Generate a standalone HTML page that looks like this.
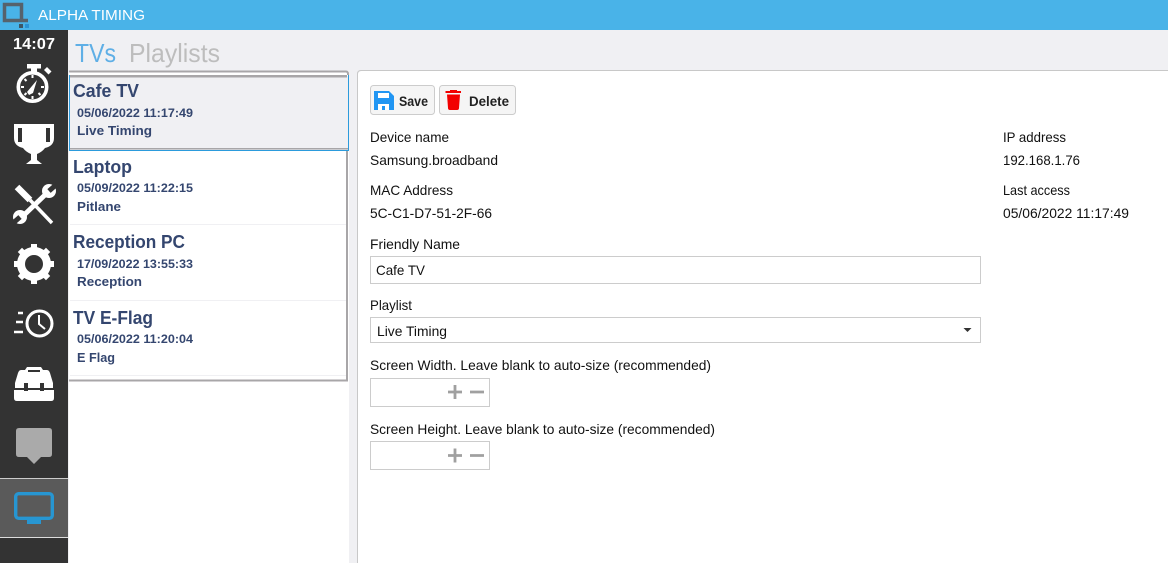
<!DOCTYPE html>
<html lang="en"><head><meta charset="utf-8"><title>Alpha Timing</title>
<style>
html,body{margin:0;padding:0;width:1168px;height:563px;overflow:hidden;background:#f0f0f3}
svg{position:absolute;left:0;top:0;display:block}
text{font-family:"Liberation Sans",sans-serif;white-space:pre}
.d{font-size:14px;fill:#111}
.t{font-size:18px;font-weight:bold;fill:#34466f}
.s{font-size:12px;font-weight:bold;fill:#34466f}
.l{font-size:13px;font-weight:bold;fill:#34466f}
.b{font-size:14px;font-weight:bold;fill:#222}
</style></head><body>
<svg width="1168" height="563" viewBox="0 0 1168 563" xmlns="http://www.w3.org/2000/svg">
<!-- title bar -->
<rect x="0" y="0" width="1168" height="30" fill="#49b3e8"/>
<path d="M4.500 4.500H21.500V20.500H4.500Z M21.500 20.500H28" fill="#49b3e8" stroke="#56626c" stroke-width="3.500"/>
<rect x="19" y="24" width="4" height="4" fill="#3d5666"/><rect x="25" y="24" width="4" height="4" fill="#2a93d5"/>
<text x="38" y="20" font-size="15" fill="#fff" textLength="107" lengthAdjust="spacingAndGlyphs">ALPHA TIMING</text>
<!-- sidebar -->
<rect x="0" y="30" width="68" height="533" fill="#333"/>
<text x="13" y="49" font-size="16" font-weight="bold" fill="#fff" textLength="42" lengthAdjust="spacingAndGlyphs">14:07</text>
<!-- stopwatch -->
<g fill="#fff">
<rect x="27" y="64" width="14" height="4.500"/><rect x="31" y="68" width="6" height="4"/>
<path d="M44 70l3-3 4.500 4.500-3 3z"/>
</g>
<circle cx="32.500" cy="87" r="14.200" fill="none" stroke="#fff" stroke-width="3.600"/>
<path d="M37 80 L27 92 L29 95 L33 93 Z" fill="#fff"/>
<g stroke="#fff" stroke-width="2"><path d="M32.500 75v3M21 87h3M41 87h3M32.500 96v3M24.500 79l2 2M24.500 95l2-2M40.500 95l-2-2"/></g>
<!-- trophy -->
<path d="M14 124H54V138Q54 146 45 148Q42 152 37 154V160L42 164H26L31 160V154Q26 152 23 148Q14 146 14 138Z" fill="#fff"/>
<rect x="18" y="128" width="4" height="14" fill="#333"/><rect x="46" y="128" width="4" height="14" fill="#333"/>
<!-- tools -->
<g fill="none">
<path d="M17 187L30 200" stroke="#fff" stroke-width="6.500"/>
<path d="M30 200L52 223" stroke="#fff" stroke-width="3.500"/>
<path d="M47 193L23 216" stroke="#fff" stroke-width="5"/>
</g>
<circle cx="49" cy="191" r="7" fill="#fff"/><circle cx="20" cy="217" r="7" fill="#fff"/>
<path d="M49 191L57 184M20 217L12 224" stroke="#333" stroke-width="5" fill="none"/>
<!-- gear -->
<g fill="none" stroke="#fff">
<circle cx="34" cy="264" r="13" stroke-width="8"/>
<path d="M34 244v40M14 264h40M19.900 249.900l28.200 28.200M48.100 249.900l-28.200 28.200" stroke-width="6" stroke-dasharray="5 30 5"/>
</g>
<!-- clock speed -->
<circle cx="39.500" cy="323.500" r="12.500" fill="none" stroke="#fff" stroke-width="3"/>
<path d="M39 315V324L45 329" fill="none" stroke="#fff" stroke-width="2"/>
<path d="M18 313H23M16 322H23M14 332H23" fill="none" stroke="#fff" stroke-width="2.500"/>
<!-- toolbox -->
<path d="M27 367H41L43 370H47Q49 370 50 373L53 383V388H15V383L18 373Q19 370 21 370H25Z" fill="#fff"/>
<rect x="28" y="370" width="12" height="2" fill="#333"/>
<path d="M14 390H54V398Q54 401 51 401H17Q14 401 14 398Z" fill="#fff"/>
<rect x="24" y="383" width="4" height="8" fill="#333"/><rect x="40" y="383" width="4" height="8" fill="#333"/>
<!-- chat -->
<path d="M19 428H49Q52 428 52 431V454Q52 457 49 457H41L34 464L27 457H19Q16 457 16 454V431Q16 428 19 428Z" fill="#aaa"/>
<!-- selected monitor -->
<rect x="0" y="478" width="68" height="60" fill="#5a5a5a"/>
<rect x="0" y="478" width="68" height="1" fill="#ccc"/><rect x="0" y="537" width="68" height="1" fill="#ddd"/>
<rect x="15.700" y="493.700" width="36.600" height="24.600" rx="3" fill="none" stroke="#2796d2" stroke-width="3.400"/>
<rect x="27" y="519" width="14" height="5" fill="#2796d2"/>
<!-- tabs -->
<text x="75" y="62" font-size="26" fill="#5fafe6" textLength="41" lengthAdjust="spacingAndGlyphs">TVs</text>
<text x="129" y="62" font-size="26" fill="#bdbdbd" textLength="91" lengthAdjust="spacingAndGlyphs">Playlists</text>
<!-- list -->
<rect x="69" y="71" width="280" height="492" fill="#fff"/>
<rect x="69" y="76" width="279" height="74" fill="#f0f0f3"/>
<path d="M69 71.500H346Q348 71.500 348 74V75" fill="none" stroke="#a8a6a8" stroke-width="2"/>
<rect x="69" y="75" width="278" height="2.500" fill="#a8a6a8"/>
<path d="M69.500 75V150M348.500 75V150M69 150.500H349" fill="none" stroke="#2b9bdc" stroke-width="1"/>
<rect x="70" y="148" width="278" height="1.500" fill="#a8a6a8"/>
<rect x="346" y="151" width="2" height="230" fill="#a8a6a8"/>
<rect x="70" y="224" width="276" height="1" fill="#f0f0f3"/>
<rect x="70" y="300" width="276" height="1" fill="#f0f0f3"/>
<rect x="70" y="375" width="276" height="1" fill="#f0f0f3"/>
<rect x="69" y="379.500" width="279" height="2" fill="#a8a6a8"/>
<text class="t" x="73" y="97" textLength="66" lengthAdjust="spacingAndGlyphs">Cafe TV</text>
<text class="s" x="77" y="117" textLength="116" lengthAdjust="spacingAndGlyphs">05/06/2022 11:17:49</text>
<text class="l" x="77" y="135" textLength="75" lengthAdjust="spacingAndGlyphs">Live Timing</text>
<text class="t" x="73" y="173" textLength="59" lengthAdjust="spacingAndGlyphs">Laptop</text>
<text class="s" x="77" y="192" textLength="116" lengthAdjust="spacingAndGlyphs">05/09/2022 11:22:15</text>
<text class="l" x="77" y="211" textLength="44" lengthAdjust="spacingAndGlyphs">Pitlane</text>
<text class="t" x="73" y="248" textLength="112" lengthAdjust="spacingAndGlyphs">Reception PC</text>
<text class="s" x="77" y="268" textLength="116" lengthAdjust="spacingAndGlyphs">17/09/2022 13:55:33</text>
<text class="l" x="77" y="286" textLength="65" lengthAdjust="spacingAndGlyphs">Reception</text>
<text class="t" x="73" y="324" textLength="80" lengthAdjust="spacingAndGlyphs">TV E-Flag</text>
<text class="s" x="77" y="343" textLength="116" lengthAdjust="spacingAndGlyphs">05/06/2022 11:20:04</text>
<text class="l" x="77" y="362" textLength="38" lengthAdjust="spacingAndGlyphs">E Flag</text>
<!-- detail panel -->
<path d="M358 563V75Q358 71 362 71H1168V563Z" fill="#fff"/>
<path d="M357.500 563V74Q357.500 70.500 361 70.500H1168" fill="none" stroke="#c8c8c8" stroke-width="1"/>
<!-- buttons -->
<rect x="370.500" y="85.500" width="64" height="29" rx="3" fill="#f5f5f5" stroke="#ccc"/>
<rect x="439.500" y="85.500" width="76" height="29" rx="3" fill="#f5f5f5" stroke="#ccc"/>
<path d="M374 91H389L394 96V110H374Z" fill="#2196f3"/>
<rect x="378" y="93" width="11" height="5" fill="#fff"/><rect x="378" y="104" width="11" height="6" fill="#fff"/><rect x="382" y="106" width="3" height="4" fill="#2196f3"/>
<path d="M450 90H457V91H461V93H445.500V91H450ZM447 94.500H460L459 108Q459 110 457 110H450Q448 110 448 108Z" fill="#f20000"/>
<text class="b" x="399" y="106" textLength="29" lengthAdjust="spacingAndGlyphs">Save</text>
<text class="b" x="469" y="106" textLength="40" lengthAdjust="spacingAndGlyphs">Delete</text>
<!-- labels -->
<text class="d" x="370" y="142" textLength="79" lengthAdjust="spacingAndGlyphs">Device name</text>
<text class="d" x="370" y="165" textLength="128" lengthAdjust="spacingAndGlyphs">Samsung.broadband</text>
<text class="d" x="370" y="195" textLength="83" lengthAdjust="spacingAndGlyphs">MAC Address</text>
<text class="d" x="370" y="218" textLength="122" lengthAdjust="spacingAndGlyphs">5C-C1-D7-51-2F-66</text>
<text class="d" x="370" y="249" textLength="90" lengthAdjust="spacingAndGlyphs">Friendly Name</text>
<rect x="370.500" y="256.500" width="610" height="27" fill="#fff" stroke="#ccc"/>
<text class="d" x="376" y="275" textLength="49" lengthAdjust="spacingAndGlyphs">Cafe TV</text>
<text class="d" x="370" y="310" textLength="42" lengthAdjust="spacingAndGlyphs">Playlist</text>
<rect x="370.500" y="317.500" width="610" height="25" fill="#fff" stroke="#ccc"/>
<text class="d" x="377" y="336" textLength="70" lengthAdjust="spacingAndGlyphs">Live Timing</text>
<path d="M963.500 328H971.500L967.500 332Z" fill="#333"/>
<text class="d" x="370" y="370" textLength="341" lengthAdjust="spacingAndGlyphs">Screen Width. Leave blank to auto-size (recommended)</text>
<rect x="370.500" y="378.500" width="119" height="28" fill="#fff" stroke="#ccc"/>
<path d="M448 392H462M455 385V399M470 392H484" fill="none" stroke="#a0a0a0" stroke-width="2.800"/>
<text class="d" x="370" y="434" textLength="345" lengthAdjust="spacingAndGlyphs">Screen Height. Leave blank to auto-size (recommended)</text>
<rect x="370.500" y="441.500" width="119" height="28" fill="#fff" stroke="#ccc"/>
<path d="M448 455.500H462M455 448.500V462.500M470 455.500H484" fill="none" stroke="#a0a0a0" stroke-width="2.800"/>
<text class="d" x="1003" y="142" textLength="63" lengthAdjust="spacingAndGlyphs">IP address</text>
<text class="d" x="1003" y="165" textLength="77" lengthAdjust="spacingAndGlyphs">192.168.1.76</text>
<text class="d" x="1003" y="195" textLength="67" lengthAdjust="spacingAndGlyphs">Last access</text>
<text class="d" x="1003" y="218" textLength="126" lengthAdjust="spacingAndGlyphs">05/06/2022 11:17:49</text>
</svg>
</body></html>
